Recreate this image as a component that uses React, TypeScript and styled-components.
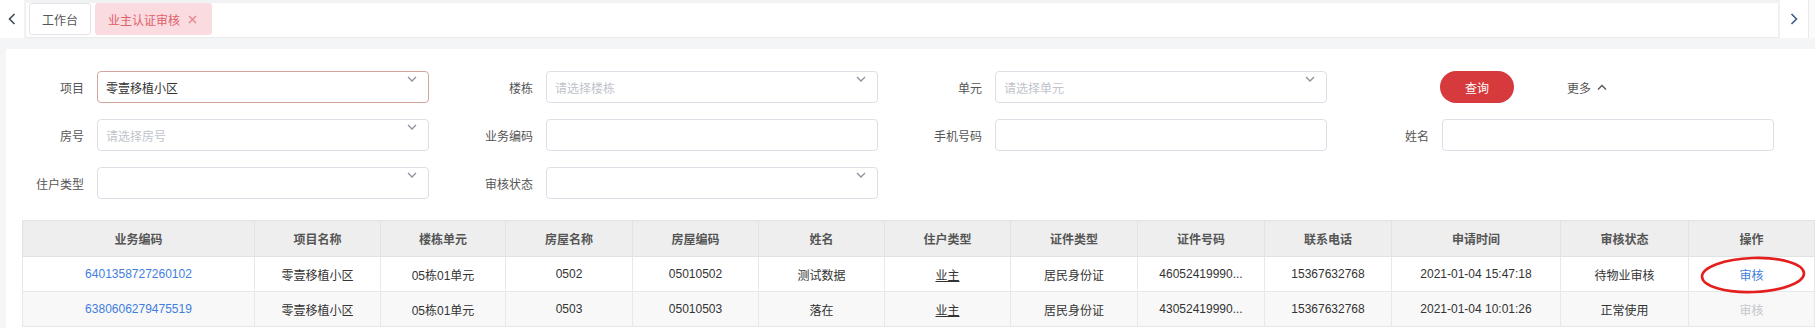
import React from "react";
import styled, { createGlobalStyle } from "styled-components";

const GlobalStyle = createGlobalStyle`
  html, body { margin: 0; padding: 0; }
  body {
    background: #f4f5f7;
    font-family: "Liberation Sans", "Noto Sans CJK SC", sans-serif;
    font-size: 12px;
    color: #333;
    overflow: hidden;
  }
  * { box-sizing: border-box; }
`;

const Page = styled.div`
  width: 1815px;
  height: 328px;
  overflow: hidden;
`;

const TopBar = styled.div`
  display: flex;
  height: 38px;
  background: #f1f2f4;
`;

const SideButton = styled.div<{ $w: number; $mr?: number; $ml?: number }>`
  width: ${(p) => p.$w}px;
  height: 38px;
  background: #fff;
  display: flex;
  align-items: center;
  justify-content: center;
  margin-right: ${(p) => p.$mr ?? 0}px;
  margin-left: ${(p) => p.$ml ?? 0}px;
`;

const EndCap = styled.div`
  width: 7px;
  height: 38px;
  background: #fbfbfb;
  border-left: 1px solid #e9e9e9;
`;

const TabsWrap = styled.div`
  flex: 1;
  margin: 3px 0 1px;
  background: #fff;
  display: flex;
  align-items: flex-start;
  gap: 4px;
  padding-left: 3px;
  box-shadow: 0 1px 2px rgba(0, 0, 0, 0.04);
`;

const Tab = styled.div<{ $active?: boolean }>`
  height: 32px;
  display: flex;
  align-items: center;
  gap: 8px;
  padding: 0 ${(p) => (p.$active ? 14 : 12)}px 0 12px;
  border-radius: 3px;
  font-size: 12px;
  background: ${(p) => (p.$active ? "#fadbdf" : "#fff")};
  color: ${(p) => (p.$active ? "#e0606b" : "#555")};
  border: 1px solid ${(p) => (p.$active ? "#fadbdf" : "#e2e4e8")};
`;

const Panel = styled.div`
  margin: 11px 0 0 6px;
  background: #fff;
  padding-top: 22px;
  height: 279px;
`;

const FormGrid = styled.div`
  display: grid;
  grid-template-columns: 449px 449px 447px 449px;
  row-gap: 16px;
`;

const FormItem = styled.div`
  display: flex;
  align-items: center;
  height: 32px;
`;

const Label = styled.div`
  width: 78px;
  margin-right: 13px;
  text-align: right;
  color: #555;
  font-size: 12px;
`;

const InputBox = styled.div<{ $focus?: boolean }>`
  position: relative;
  width: 332px;
  height: 32px;
  border: 1px solid ${(p) => (p.$focus ? "#d2a69c" : "#dcdfe6")};
  border-radius: 4px;
  background: #fff;
  display: flex;
  align-items: center;
  padding-left: 8px;
  font-size: 12px;
  color: #333;
`;

const Placeholder = styled.span`
  color: #c0c4cc;
`;

const Caret = styled.span`
  position: absolute;
  right: 11px;
  top: 4px;
  line-height: 0;
`;

const Actions = styled.div`
  display: flex;
  align-items: center;
  padding-left: 89px;
  height: 32px;
`;

const QueryButton = styled.button`
  width: 74px;
  height: 32px;
  border: none;
  border-radius: 16px;
  background: #d63a3c;
  color: #fff;
  font-family: inherit;
  font-size: 12px;
  cursor: pointer;
`;

const MoreToggle = styled.div`
  margin-left: 53px;
  display: flex;
  align-items: center;
  gap: 6px;
  color: #555;
  font-size: 12px;
`;

const TableWrap = styled.div`
  margin-top: 21px;
  padding-left: 16px;
`;

const Table = styled.table`
  width: 1792px;
  table-layout: fixed;
  border-collapse: collapse;
  font-size: 12px;
`;

const Th = styled.th`
  height: 36px;
  background: #eeeeee;
  color: #555;
  font-weight: 700;
  border: 1px solid #e2e2e2;
  padding: 0;
  text-align: center;
`;

const Tr = styled.tr<{ $striped?: boolean }>`
  background: ${(p) => (p.$striped ? "#f8f8f8" : "#fff")};
`;

const Td = styled.td`
  position: relative;
  height: 35px;
  border: 1px solid #e8e8e8;
  padding: 0;
  text-align: center;
  color: #333;
`;

const CellText = styled.div`
  padding: 0 18px;
  white-space: nowrap;
`;

const Link = styled.span<{ $disabled?: boolean }>`
  color: ${(p) => (p.$disabled ? "#c4c7cc" : "#3f7ee0")};
  cursor: pointer;
`;

const Underlined = styled.span`
  text-decoration: underline;
  color: #333;
`;

const Annotation = styled.svg`
  position: absolute;
  left: 10px;
  top: -2px;
  pointer-events: none;
`;

const ChevronLeft = () => (
  <svg width="8" height="12" viewBox="0 0 8 12">
    <polyline points="6.5,1 1.5,6 6.5,11" fill="none" stroke="#3e4a5c" strokeWidth="1.6" />
  </svg>
);

const ChevronRight = () => (
  <svg width="8" height="12" viewBox="0 0 8 12">
    <polyline points="1.5,1 6.5,6 1.5,11" fill="none" stroke="#3b5b8c" strokeWidth="1.6" />
  </svg>
);

const CaretDown = () => (
  <svg width="10" height="6" viewBox="0 0 10 6">
    <polyline points="1,1 5,5 9,1" fill="none" stroke="#8a919c" strokeWidth="1.3" />
  </svg>
);

const CaretUp = () => (
  <svg width="10" height="6" viewBox="0 0 10 6">
    <polyline points="1,5.5 5,1.5 9,5.5" fill="none" stroke="#555" strokeWidth="1.3" />
  </svg>
);

const CloseIcon = () => (
  <svg width="9" height="9" viewBox="0 0 9 9">
    <path d="M1 1 L8 8 M8 1 L1 8" stroke="#e8858d" strokeWidth="1.4" />
  </svg>
);

type Field = { label: string; select?: boolean; value?: string; placeholder?: string; focus?: boolean };

const formFields: (Field | "actions")[] = [
  { label: "项目", select: true, value: "零壹移植小区", focus: true },
  { label: "楼栋", select: true, placeholder: "请选择楼栋" },
  { label: "单元", select: true, placeholder: "请选择单元" },
  "actions",
  { label: "房号", select: true, placeholder: "请选择房号" },
  { label: "业务编码" },
  { label: "手机号码" },
  { label: "姓名" },
  { label: "住户类型", select: true },
  { label: "审核状态", select: true },
];

const columns = [
  { title: "业务编码", w: 232 },
  { title: "项目名称", w: 126 },
  { title: "楼栋单元", w: 125 },
  { title: "房屋名称", w: 127 },
  { title: "房屋编码", w: 126 },
  { title: "姓名", w: 126 },
  { title: "住户类型", w: 126 },
  { title: "证件类型", w: 127 },
  { title: "证件号码", w: 127 },
  { title: "联系电话", w: 127 },
  { title: "申请时间", w: 169 },
  { title: "审核状态", w: 128 },
  { title: "操作", w: 126 },
];

const data = [
  {
    code: "6401358727260102",
    project: "零壹移植小区",
    unit: "05栋01单元",
    room: "0502",
    roomCode: "05010502",
    name: "测试数据",
    type: "业主",
    idType: "居民身份证",
    idNo: "46052419990...",
    phone: "15367632768",
    time: "2021-01-04 15:47:18",
    status: "待物业审核",
    enabled: true,
  },
  {
    code: "6380606279475519",
    project: "零壹移植小区",
    unit: "05栋01单元",
    room: "0503",
    roomCode: "05010503",
    name: "落在",
    type: "业主",
    idType: "居民身份证",
    idNo: "43052419990...",
    phone: "15367632768",
    time: "2021-01-04 10:01:26",
    status: "正常使用",
    enabled: false,
  },
];

export default function App() {
  return (
    <Page>
      <GlobalStyle />
      <TopBar>
        <SideButton $w={24} $mr={2}>
          <ChevronLeft />
        </SideButton>
        <TabsWrap>
          <Tab>工作台</Tab>
          <Tab $active>
            业主认证审核
            <CloseIcon />
          </Tab>
        </TabsWrap>
        <SideButton $w={28} $ml={2}>
          <ChevronRight />
        </SideButton>
        <EndCap />
      </TopBar>
      <Panel>
        <FormGrid>
          {formFields.map((f, i) =>
            f === "actions" ? (
              <Actions key={i}>
                <QueryButton>查询</QueryButton>
                <MoreToggle>
                  更多
                  <CaretUp />
                </MoreToggle>
              </Actions>
            ) : (
              <FormItem key={i}>
                <Label>{f.label}</Label>
                <InputBox $focus={f.focus}>
                  {f.value ? f.value : f.placeholder ? <Placeholder>{f.placeholder}</Placeholder> : null}
                  {f.select && (
                    <Caret>
                      <CaretDown />
                    </Caret>
                  )}
                </InputBox>
              </FormItem>
            )
          )}
        </FormGrid>
        <TableWrap>
          <Table>
            <colgroup>
              {columns.map((c) => (
                <col key={c.title} style={{ width: c.w }} />
              ))}
            </colgroup>
            <thead>
              <tr>
                {columns.map((c) => (
                  <Th key={c.title}>{c.title}</Th>
                ))}
              </tr>
            </thead>
            <tbody>
              {data.map((r, i) => (
                <Tr key={r.code} $striped={i % 2 === 1}>
                  <Td>
                    <CellText>
                      <Link>{r.code}</Link>
                    </CellText>
                  </Td>
                  <Td><CellText>{r.project}</CellText></Td>
                  <Td><CellText>{r.unit}</CellText></Td>
                  <Td><CellText>{r.room}</CellText></Td>
                  <Td><CellText>{r.roomCode}</CellText></Td>
                  <Td><CellText>{r.name}</CellText></Td>
                  <Td>
                    <CellText>
                      <Underlined>{r.type}</Underlined>
                    </CellText>
                  </Td>
                  <Td><CellText>{r.idType}</CellText></Td>
                  <Td><CellText>{r.idNo}</CellText></Td>
                  <Td><CellText>{r.phone}</CellText></Td>
                  <Td><CellText>{r.time}</CellText></Td>
                  <Td><CellText>{r.status}</CellText></Td>
                  <Td>
                    <CellText>
                      <Link $disabled={!r.enabled}>审核</Link>
                    </CellText>
                    {i === 0 && (
                      <Annotation width="108" height="40" viewBox="0 0 108 40">
                        <ellipse
                          cx="54"
                          cy="20"
                          rx="51"
                          ry="17"
                          fill="none"
                          stroke="#e3201e"
                          strokeWidth="2.6"
                          transform="rotate(-2 54 20)"
                        />
                      </Annotation>
                    )}
                  </Td>
                </Tr>
              ))}
            </tbody>
          </Table>
        </TableWrap>
      </Panel>
    </Page>
  );
}
